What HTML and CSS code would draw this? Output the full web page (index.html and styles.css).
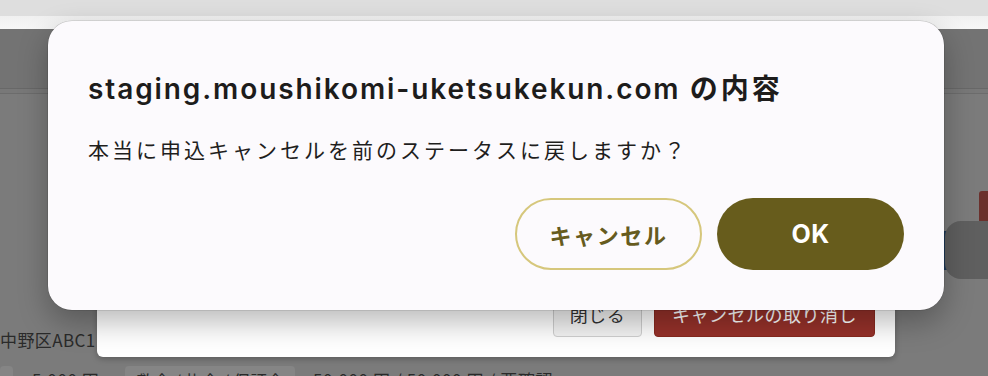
FILE: index.html
```html
<!DOCTYPE html>
<html lang="ja">
<head>
<meta charset="utf-8">
<title>確認</title>
<link rel="stylesheet" href="styles.css">
</head>
<body>
<div class="screen">
  <div class="topbar"></div>
  <div class="strip"></div>
  <div class="page">
    <div class="page-header"></div>
    <div class="subbar"></div>
    <div class="page-body">
      <div class="addr">中野区ABC1</div>
      <div class="fee-row">
        <span class="pill pill-small"></span>
        <span class="fee fee-first">5,000 円</span>
        <span class="pill">敷金 / 礼金 / 保証金</span>
        <span class="fee">50,000 円 / 50,000 円 / 要確認</span>
      </div>
    </div>
    <div class="side-red"></div>
    <div class="side-blue"></div>
    <div class="side-fab"></div>
  </div>

  <div class="under-modal">
    <div class="under-footer">
      <button class="btn-close">閉じる</button>
      <button class="btn-undo">キャンセルの取り消し</button>
    </div>
  </div>

  <div class="dialog">
    <h1 class="dialog-title"><span class="host">staging.moushikomi-uketsukekun.com</span> の内容</h1>
    <p class="dialog-message">本当に申込キャンセルを前のステータスに戻しますか？</p>
    <div class="dialog-actions">
      <button class="btn-cancel">キャンセル</button>
      <button class="btn-ok">OK</button>
    </div>
  </div>
</div>
</body>
</html>
```

FILE: styles.css
```css
* { box-sizing: border-box; }

html, body {
  margin: 0;
  padding: 0;
  width: 988px;
  height: 376px;
  overflow: hidden;
  font-family: "Noto Sans CJK JP", "Noto Sans", sans-serif;
}

.screen {
  position: relative;
  width: 988px;
  height: 376px;
  overflow: hidden;
  background: #7b7b7b;
}

.topbar {
  height: 16px;
  background: #dedede;
}

.strip {
  height: 13px;
  background: linear-gradient(#f0f0f0, #f7f7f7);
}

.page {
  position: relative;
  height: 347px;
  background: #7b7b7b;
}

.page-header {
  height: 60px;
  background: #737373;
  border-bottom: 1px solid #686868;
}

.subbar {
  height: 5px;
  background: #787878;
  border-bottom: 1px solid #6c6c6c;
}

.page-body {
  padding-top: 235px;
  color: #2a2a2a;
}

.addr {
  font-size: 17px;
  line-height: 22px;
  letter-spacing: 0.4px;
  white-space: nowrap;
}

.fee-row {
  margin-top: 15px;
  display: flex;
  align-items: center;
  font-size: 17px;
  line-height: 26px;
  color: #2a2a2a;
  white-space: nowrap;
}

.pill {
  background: #858585;
  border-radius: 4px;
  padding: 0 11px;
  height: 28px;
  line-height: 30px;
  margin-right: 18px;
}

.pill-small {
  width: 13px;
  padding: 0;
  margin-right: 19px;
}

.fee {
  letter-spacing: 0.6px;
}

.fee-first {
  margin-right: 26px;
}

.side-red {
  position: absolute;
  left: 979px;
  top: 162px;
  width: 20px;
  height: 32px;
  background: #6b302c;
  border-radius: 3px;
}

.side-blue {
  position: absolute;
  left: 940px;
  top: 202px;
  width: 30px;
  height: 39px;
  background: #1f3b5c;
  border-radius: 3px;
}

.side-fab {
  position: absolute;
  left: 945px;
  top: 192px;
  width: 70px;
  height: 58px;
  background: #5f5f5f;
  border-radius: 16px;
}

.under-modal {
  position: absolute;
  left: 97px;
  top: 200px;
  width: 798px;
  height: 157px;
  background: #ffffff;
  border-radius: 6px;
  display: flex;
  flex-direction: column;
  justify-content: flex-end;
  padding: 0 20px 20px 0;
  box-shadow: 0 2px 6px rgba(0,0,0,0.25);
}

.under-footer {
  display: flex;
  justify-content: flex-end;
  gap: 12px;
}

.under-footer button {
  font-family: "Noto Sans CJK JP", sans-serif;
  font-size: 18px;
  height: 46px;
  padding: 0;
  border-radius: 4px;
  line-height: 1;
  white-space: nowrap;
  letter-spacing: 0.5px;
}

.btn-close {
  width: 89px;
  background: #f4f4f4;
  border: 1px solid #cfcfcf;
  color: #333;
}

.btn-undo {
  width: 221px;
  background: #96312a;
  border: 1px solid #87291f;
  color: #ffffff;
}

.dialog {
  position: absolute;
  left: 48px;
  top: 21px;
  width: 896px;
  height: 289px;
  background: #fcfafd;
  border-radius: 24px;
  padding: 49px 40px 40px 40px;
  box-shadow: 0 0 0 0.5px rgba(0,0,0,0.18), 0 12px 30px rgba(0,0,0,0.28);
  display: flex;
  flex-direction: column;
}

.dialog-title {
  margin: 0;
  font-size: 28px;
  line-height: 34px;
  font-weight: 600;
  color: #1d1c1b;
  font-family: "Noto Sans CJK JP", sans-serif;
  letter-spacing: 3px;
  white-space: nowrap;
}

.dialog-title .host {
  font-family: "Inter", "Noto Sans", sans-serif;
  letter-spacing: 1.9px;
}

.dialog-message {
  margin: 29px 0 0 0;
  font-size: 21px;
  line-height: 28px;
  color: #1f1e1d;
  letter-spacing: 3px;
  white-space: nowrap;
}

.dialog-actions {
  margin-top: auto;
  display: flex;
  justify-content: flex-end;
  gap: 15px;
}

.dialog-actions button {
  width: 187px;
  height: 72px;
  border-radius: 36px;
  font-family: "Noto Sans CJK JP", sans-serif;
  font-size: 22px;
  font-weight: 700;
  letter-spacing: 1.6px;
  cursor: pointer;
}

.btn-cancel {
  background: #fcfafd;
  border: 2px solid #d6c77c;
  color: #665b1e;
}

.dialog-actions .btn-ok {
  background: #675c1c;
  border: none;
  color: #ffffff;
  font-family: "Inter", "Noto Sans", sans-serif;
  font-size: 25px;
  letter-spacing: 0.5px;
}
```
